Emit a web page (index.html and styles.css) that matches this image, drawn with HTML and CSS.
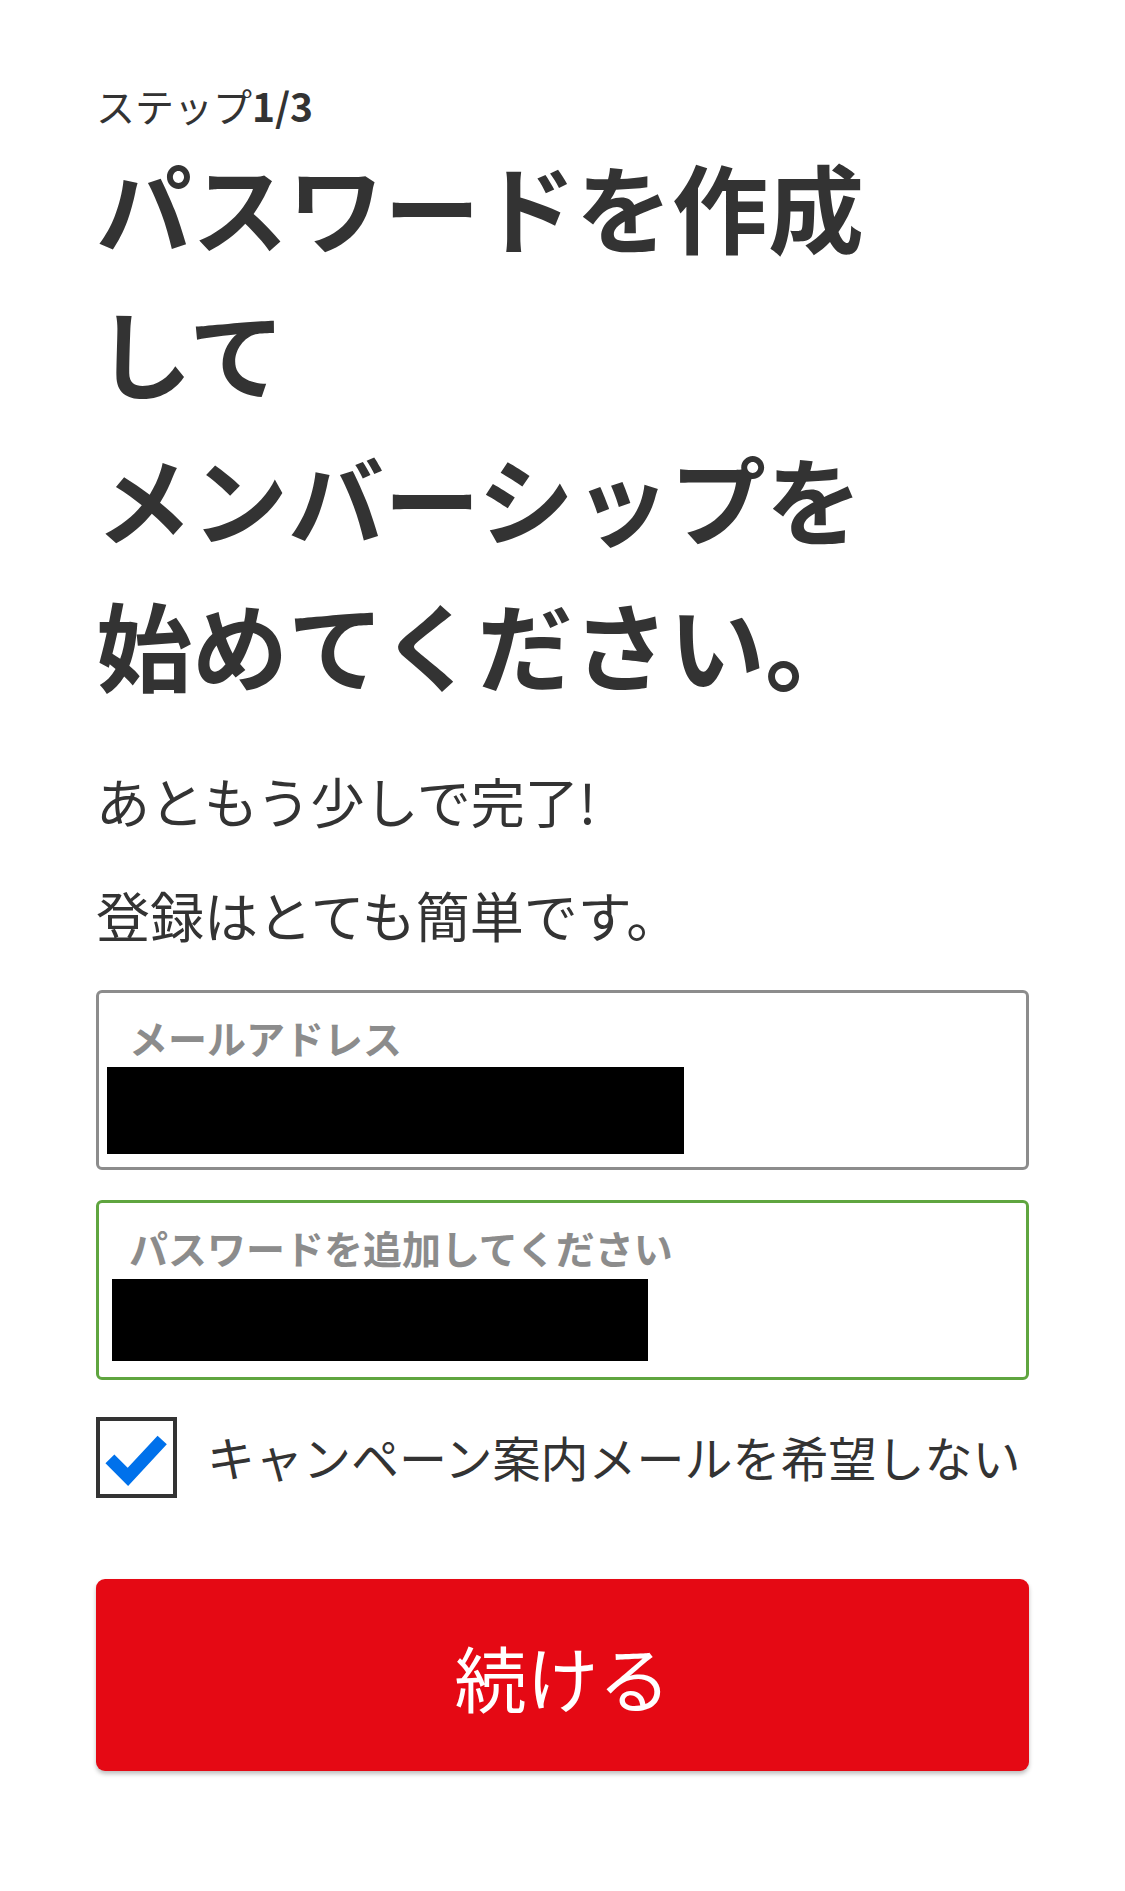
FILE: index.html
```html
<!DOCTYPE html>
<html lang="ja">
<head>
    <meta charset="UTF-8">
    <meta name="viewport" content="width=device-width, initial-scale=1.0">
    <title>パスワードを作成</title>
    <link rel="stylesheet" href="styles.css">
</head>
<body>
    <main class="page">
        <div class="step">ステップ<b>1/3</b></div>
        <h1 class="title">パスワードを作成<br>して<br>メンバーシップを<br>始めてください。</h1>
        <p class="lead">あともう少しで完了!</p>
        <p class="lead lead-second">登録はとても簡単です。</p>

        <form class="signup">
            <div class="field">
                <label class="field-label">メールアドレス</label>
                <div class="field-value value-email"></div>
            </div>
            <div class="field field-active">
                <label class="field-label">パスワードを追加してください</label>
                <div class="field-value value-password"></div>
            </div>

            <label class="opt-out">
                <span class="checkbox">
                    <svg viewBox="0 0 81 81" width="73" height="73">
                        <path d="M11 42 L31 62 L69 21" fill="none" stroke="#0071eb" stroke-width="14" stroke-linejoin="miter"/>
                    </svg>
                </span>
                <span class="opt-out-text">キャンペーン案内メールを希望しない</span>
            </label>

            <button type="button" class="next">続ける</button>
        </form>
    </main>
</body>
</html>
```

FILE: styles.css
```css
body {
    margin: 0;
    padding: 0;
    background-color: #fff;
    color: #333;
    font-family: "Noto Sans CJK JP", "Noto Sans", sans-serif;
}
.page {
    padding: 76px 96px 100px;
}
.step {
    font-size: 39px;
    line-height: 58px;
}
.step b {
    font-weight: 700;
}
.title {
    margin: -2px 0 0;
    font-size: 96px;
    line-height: 146px;
    font-weight: 700;
}
.lead {
    margin: 44px 0 0;
    font-size: 54px;
    line-height: 81px;
}
.lead-second {
    margin-top: 33px;
}
.signup {
    margin-top: 35px;
}
.field {
    box-sizing: border-box;
    height: 180px;
    border: 3px solid #8c8c8c;
    border-radius: 6px;
    padding: 22px 0 0 8px;
}
.field + .field {
    margin-top: 30px;
}
.field-active {
    border-color: #5fa53f;
}
.field-label {
    display: block;
    margin-left: 22px;
    font-size: 39px;
    line-height: 44px;
    font-weight: 700;
    color: #8c8c8c;
}
.field-value {
    background-color: #000;
}
.value-email {
    margin-top: 8px;
    width: 577px;
    height: 87px;
}
.value-password {
    margin-top: 10px;
    margin-left: 5px;
    width: 536px;
    height: 82px;
}
.opt-out {
    display: flex;
    align-items: center;
    gap: 30px;
    margin-top: 37px;
}
.checkbox {
    box-sizing: border-box;
    width: 81px;
    height: 81px;
    border: 4px solid #333;
    display: flex;
    align-items: center;
    justify-content: center;
}
.opt-out-text {
    font-size: 48px;
    line-height: 70px;
    color: #333;
    margin-top: -4px;
}
.next {
    display: block;
    width: 100%;
    height: 192px;
    margin-top: 81px;
    border: none;
    border-radius: 9px;
    background-color: #e50914;
    color: #fff;
    font-family: "Noto Sans CJK JP", sans-serif;
    font-size: 72px;
    box-shadow: 0 3px 4px rgba(0, 0, 0, 0.25);
}
```
